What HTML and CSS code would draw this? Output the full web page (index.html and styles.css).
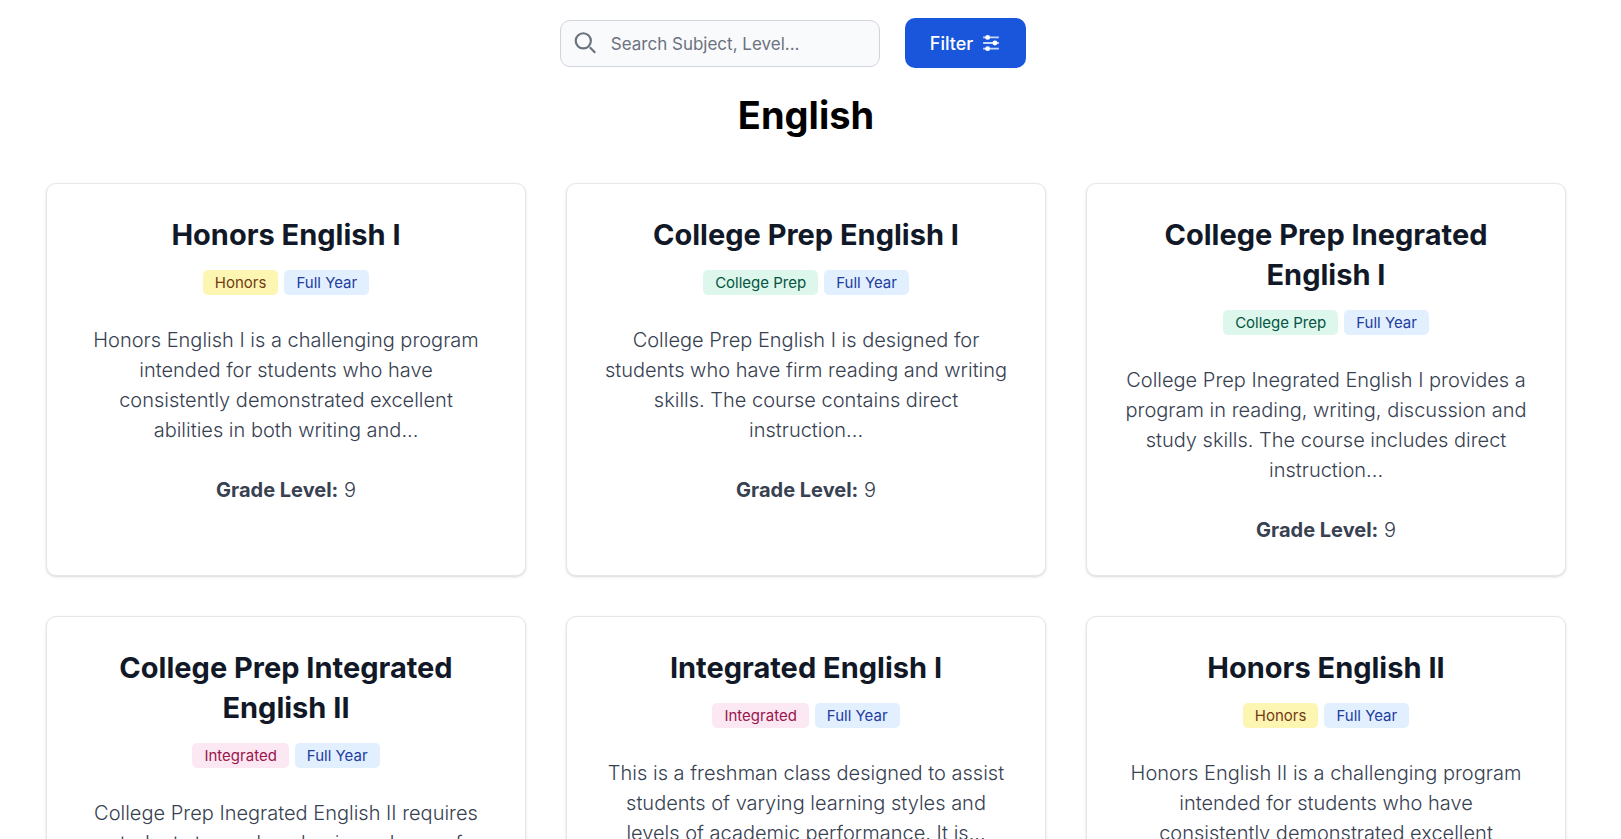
FILE: index.html
```html
<!DOCTYPE html>
<html lang="en">
<head>
<meta charset="utf-8">
<title>English courses</title>
<link rel="stylesheet" href="styles.css">
</head>
<body>
<form class="toolbar" role="search">
  <div class="search">
    <svg class="search-icon" viewBox="0 0 24 24" aria-hidden="true"><circle cx="9.5" cy="10" r="7"/><path d="M15.5 16l5 5"/></svg>
    <input class="search-input" type="search" aria-label="Search courses" placeholder="Search Subject, Level...">
  </div>
  <button class="filter" type="button">Filter
    <svg class="filter-icon" viewBox="0 0 16 16" aria-hidden="true"><path class="track" d="M1 3h14M1 8h14M1 13h14"/><circle cx="5" cy="3" r="2.2"/><circle cx="11.5" cy="8" r="2.2"/><circle cx="5" cy="13" r="2.2"/></svg>
  </button>
</form>
<main>
  <h1 class="subject">English</h1>
  <div class="courses">
    <article class="card">
      <h2 class="title">Honors English I</h2>
      <div class="tags"><span class="tag honors">Honors</span><span class="tag term">Full Year</span></div>
      <p class="text">Honors English I is a challenging program intended for students who have consistently demonstrated excellent abilities in both writing and...</p>
      <p class="text"><strong>Grade Level:</strong> 9</p>
    </article>
    <article class="card">
      <h2 class="title">College Prep English I</h2>
      <div class="tags"><span class="tag prep">College Prep</span><span class="tag term">Full Year</span></div>
      <p class="text">College Prep English I is designed for students who have firm reading and writing skills. The course contains direct instruction...</p>
      <p class="text"><strong>Grade Level:</strong> 9</p>
    </article>
    <article class="card">
      <h2 class="title">College Prep Inegrated English I</h2>
      <div class="tags"><span class="tag prep">College Prep</span><span class="tag term">Full Year</span></div>
      <p class="text">College Prep Inegrated English I provides a program in reading, writing, discussion and study skills. The course includes direct instruction...</p>
      <p class="text"><strong>Grade Level:</strong> 9</p>
    </article>
    <article class="card">
      <h2 class="title">College Prep Integrated English II</h2>
      <div class="tags"><span class="tag integrated">Integrated</span><span class="tag term">Full Year</span></div>
      <p class="text">College Prep Inegrated English II requires students to produce basic analyses of</p>
    </article>
    <article class="card">
      <h2 class="title">Integrated English I</h2>
      <div class="tags"><span class="tag integrated">Integrated</span><span class="tag term">Full Year</span></div>
      <p class="text">This is a freshman class designed to assist students of varying learning styles and levels of academic performance. It is...</p>
    </article>
    <article class="card">
      <h2 class="title">Honors English II</h2>
      <div class="tags"><span class="tag honors">Honors</span><span class="tag term">Full Year</span></div>
      <p class="text">Honors English II is a challenging program intended for students who have consistently demonstrated excellent</p>
    </article>
  </div>
</main>
</body>
</html>
```
FILE: styles.css
```css
* { box-sizing: border-box; }
html { scrollbar-width: none; }
body {
  margin: 0;
  padding: 18px 9px 40px 0;
  background: #fff;
  color: #000;
  font-family: Inter, "Liberation Sans", sans-serif;
}
.toolbar {
  display: flex;
  justify-content: center;
  align-items: center;
  gap: 25px;
  padding-right: 26px;
}
.search {
  display: flex;
  align-items: center;
  gap: 12px;
  width: 320px;
  height: 47px;
  padding: 0 12px;
  border: 1px solid #d1d5db;
  border-radius: 10px;
  background: #f9fafb;
}
.search-icon {
  flex: none;
  width: 26px;
  height: 26px;
  fill: none;
  stroke: #6b7280;
  stroke-width: 2;
}
.search-input {
  flex: 1;
  min-width: 0;
  padding: 2px 0 0;
  border: 0;
  outline: 0;
  background: transparent;
  color: #111827;
  font: 400 17px/28px Inter, "Liberation Sans", sans-serif;
}
.search-input::placeholder { color: #6b7280; opacity: 1; }
.filter {
  display: flex;
  align-items: center;
  gap: 9px;
  height: 50px;
  padding: 2px 26px 0 25px;
  border: 0;
  border-radius: 10px;
  background: #1a56db;
  color: #fff;
  font: 500 18px/28px Inter, "Liberation Sans", sans-serif;
}
.filter-icon { width: 18px; height: 18px; margin-bottom: 2px; fill: #fff; }
.filter-icon .track { fill: none; stroke: #c7d7f8; stroke-width: 1.6; }
.subject {
  margin: 22px 0 43px;
  font-size: 38px;
  line-height: 50px;
  font-weight: 700;
  text-align: center;
}
.courses {
  display: grid;
  grid-template-columns: repeat(3, minmax(0, 480px));
  justify-content: center;
  gap: 40px;
}
.card {
  padding: 31px 36px 30px;
  border: 1px solid #e5e7eb;
  border-radius: 10px;
  background: #fff;
  box-shadow: 0 1px 3px rgba(0, 0, 0, .1), 0 1px 2px rgba(0, 0, 0, .06);
  text-align: center;
}
.title {
  margin: 0 0 15px;
  color: #111827;
  font-size: 29px;
  line-height: 40px;
  font-weight: 700;
}
.tags {
  display: flex;
  justify-content: center;
  gap: 6px;
  margin-bottom: 30px;
}
.tag {
  padding: 1px 12px;
  border-radius: 5px;
  font-size: 15px;
  line-height: 23px;
}
.honors { background: #fdf6b2; color: #723b13; }
.prep { background: #def7ec; color: #03543f; }
.integrated { background: #fce8f3; color: #99154b; }
.term { background: #e1effe; color: #233ca0; }
.text {
  margin: 0;
  color: #374151;
  font-size: 20px;
  line-height: 30px;
  font-weight: 300;
}
.text + .text { margin-top: 30px; }
.text strong { font-weight: 700; }
```
